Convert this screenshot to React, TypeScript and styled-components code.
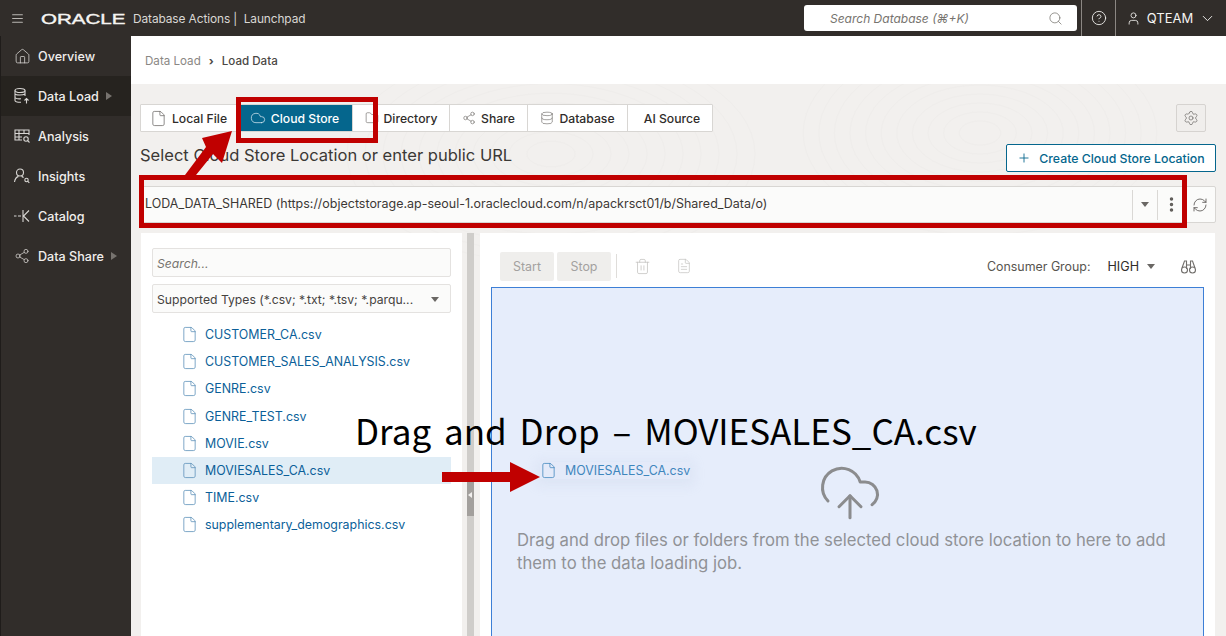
import React from 'react'
import styled, { createGlobalStyle } from 'styled-components'
import {
  AlignJustify,
  ChevronDown,
  CircleHelp,
  Cloud,
  CloudUpload,
  Database,
  EllipsisVertical,
  File,
  FileText,
  Folder,
  House,
  Plus,
  RefreshCw,
  Search,
  Settings,
  Share2,
  Trash2,
  User,
} from 'lucide-react'

const GlobalStyle = createGlobalStyle`
  html, body {
    margin: 0;
    padding: 0;
    width: 1226px;
    height: 636px;
    overflow: hidden;
    font-family: Inter, "Noto Sans", sans-serif;
  }
  * { box-sizing: border-box; }
`

const Page = styled.div`
  position: relative;
  display: flex;
  flex-direction: column;
  width: 1226px;
  height: 636px;
  overflow: hidden;
  background: #fff;
`

const Header = styled.header`
  display: flex;
  align-items: stretch;
  flex: none;
  height: 36px;
  background: #312d2a;
  color: #f5f4f2;
`

const Burger = styled.div`
  display: flex;
  align-items: center;
  width: 41px;
  padding-left: 11px;
  color: #b9b6b2;
`

const Brand = styled.div`
  display: flex;
  align-items: center;
  flex: 1;
`

const OracleMark = styled.span`
  display: inline-block;
  width: 86px;
  font-family: 'Liberation Sans', sans-serif;
  font-size: 15px;
  font-weight: 400;
  -webkit-text-stroke: 0.4px #f5f4f2;
  transform: scaleX(1.37);
  transform-origin: left center;
`

const AppName = styled.span`
  margin-left: 6px;
  font-size: 11.9px;
  color: #d9d7d4;
  letter-spacing: -0.1px;
`

const GlobalSearch = styled.div`
  display: flex;
  align-items: center;
  justify-content: space-between;
  align-self: center;
  width: 273px;
  height: 26px;
  margin-right: 4px;
  padding: 0 14px 0 26px;
  background: #fff;
  border-radius: 3px;
  color: #77746f;
  font-size: 12px;
  font-style: italic;
`

const HeaderCell = styled.div<{ $width: number }>`
  display: flex;
  align-items: center;
  justify-content: center;
  gap: 6px;
  width: ${(p) => p.$width}px;
  border-left: 1px solid #8b8783;
  font-size: 13px;
`

const Body = styled.div`
  display: flex;
  flex: 1;
  min-height: 0;
`

const Sidebar = styled.nav`
  flex: none;
  width: 131px;
  background: #312d2a;
  border-left: 1px solid #1f1c1a;
`

const NavRow = styled.div<{ $active?: boolean }>`
  display: flex;
  align-items: center;
  height: 40px;
  padding-left: 12px;
  gap: 7px;
  background: ${(p) => (p.$active ? '#26231f' : 'transparent')};
  color: #f0eeec;
  font-size: 12.6px;
  font-weight: 500;
`

const NavIcon = styled.span`
  display: flex;
  width: 18px;
  justify-content: center;
  color: #d8d6d3;
`

const NavCaret = styled.span`
  width: 0;
  height: 0;
  border-left: 6px solid #77736f;
  border-top: 4px solid transparent;
  border-bottom: 4px solid transparent;
`

const Main = styled.main`
  display: flex;
  flex-direction: column;
  flex: 1;
  min-width: 0;
`

const Breadcrumbs = styled.div`
  display: flex;
  align-items: center;
  flex: none;
  height: 48px;
  padding: 1px 0 0 14px;
  gap: 8px;
  font-size: 11.6px;
  color: #8a8784;
`

const Crumb = styled.span`
  color: #4b4845;
  font-weight: 500;
`

const CrumbSeparator = styled.span`
  color: #4b4845;
  font-weight: 700;
`

const Workspace = styled.div`
  position: relative;
  display: flex;
  flex-direction: column;
  flex: 1;
  min-height: 0;
  padding: 20px 10px 0 9px;
  background: #f2f0ee;
`

const Texture = styled.svg`
  position: absolute;
  inset: 0;
  width: 100%;
  height: 100%;
  pointer-events: none;
`

const TabRow = styled.div`
  position: relative;
  display: flex;
  justify-content: space-between;
  flex: none;
  height: 28px;
  padding-right: 10px;
`

const Tabs = styled.div`
  display: flex;
  background: #fff;
  border: 1px solid #d8d6d3;
  border-radius: 1px;
`

const Tab = styled.div<{ $width: number; $active?: boolean; $nudge?: number }>`
  display: flex;
  align-items: center;
  justify-content: center;
  gap: 5px;
  width: ${(p) => p.$width}px;
  padding-left: ${(p) => Math.max(p.$nudge ?? 0, 0)}px;
  padding-right: ${(p) => Math.max(-(p.$nudge ?? 0), 0)}px;
  border-left: 1px solid ${(p) => (p.$active ? '#05668d' : '#d8d6d3')};
  background: ${(p) => (p.$active ? '#05668d' : 'transparent')};
  color: ${(p) => (p.$active ? '#fff' : '#2f2c2a')};
  font-size: 12.2px;
  font-weight: 500;
  &:first-child {
    border-left: 0;
  }
  svg {
    color: ${(p) => (p.$active ? '#dcebf2' : '#6f6c69')};
  }
`

const SquareButton = styled.div`
  display: flex;
  align-items: center;
  justify-content: center;
  width: 30px;
  background: #f0eeec;
  border: 1px solid #d6d3d0;
  border-radius: 2px;
  color: #716e6b;
`

const HeadingRow = styled.div`
  position: relative;
  display: flex;
  align-items: flex-start;
  justify-content: space-between;
  flex: none;
  height: 28px;
  margin-top: 12px;
`

const Heading = styled.h2`
  margin: 0;
  font-size: 16.55px;
  font-weight: 400;
  line-height: 22px;
  color: #3b3835;
`

const CreateButton = styled.div`
  display: flex;
  align-items: center;
  justify-content: center;
  gap: 8px;
  width: 210px;
  height: 28px;
  background: #fff;
  border: 1px solid #05668d;
  border-radius: 2px;
  color: #05668d;
  font-size: 12.3px;
  font-weight: 500;
`

const LocationRow = styled.div`
  position: relative;
  display: flex;
  flex: none;
  height: 37px;
  margin-top: 14px;
  background: #fbfbfa;
  border: 1px solid #d8d6d3;
  border-radius: 2px;
  align-items: center;
`

const LocationText = styled.div`
  flex: 1;
  padding: 0 0 2px 4px;
  font-size: 12.48px;
  color: #3b3835;
  white-space: nowrap;
`

const LocationCell = styled.div<{ $width: number; $divider?: boolean }>`
  display: flex;
  align-items: center;
  justify-content: center;
  width: ${(p) => p.$width}px;
  height: 30px;
  border-left: ${(p) => (p.$divider ? '1px solid #dad8d5' : '0')};
  color: #5f5c59;
`

const Caret = styled.span`
  display: inline-block;
  width: 0;
  height: 0;
  border-top: 5px solid #6a6764;
  border-left: 4px solid transparent;
  border-right: 4px solid transparent;
`

const Panels = styled.div`
  position: relative;
  display: flex;
  flex: 1;
  min-height: 0;
  margin-top: 10px;
`

const LeftPanel = styled.section`
  flex: none;
  width: 321px;
  margin-left: 1px;
  padding: 15px 11px 0;
  background: #fff;
`

const FieldBox = styled.div`
  display: flex;
  align-items: center;
  justify-content: space-between;
  height: 29px;
  padding: 1px 4px 0;
  background: #fbfbfa;
  border: 1px solid #e4e2e0;
  border-radius: 2px;
  font-size: 12.2px;
  color: #45423f;
`

const SearchBox = styled(FieldBox)`
  margin-bottom: 7px;
  font-style: italic;
  color: #77746f;
`

const TypeSelect = styled(FieldBox)`
  padding-right: 11px;
  margin-bottom: 8px;
`

const FileRow = styled.div<{ $selected?: boolean }>`
  display: flex;
  align-items: center;
  gap: 7px;
  height: 27.2px;
  padding-left: 29px;
  background: ${(p) => (p.$selected ? '#e0edf6' : 'transparent')};
  color: #0b5f99;
  font-size: 12.4px;
  svg {
    color: #5a8fb8;
  }
`

const Splitter = styled.div`
  position: relative;
  display: flex;
  flex: none;
  width: 18px;
  padding-left: 5px;
  &::before {
    content: '';
    width: 7px;
    background: #cfcdca;
  }
`

const SplitHandle = styled.span`
  position: absolute;
  left: 5px;
  top: 249px;
  width: 7px;
  height: 34px;
  background: #a3a09d;
  &::after {
    content: '';
    position: absolute;
    left: 1px;
    top: 10px;
    border-right: 4px solid #f2f0ee;
    border-top: 3px solid transparent;
    border-bottom: 3px solid transparent;
  }
`

const RightPanel = styled.section`
  display: flex;
  flex-direction: column;
  flex: none;
  width: 735px;
  background: #fff;
`

const Toolbar = styled.div`
  display: flex;
  align-items: center;
  flex: none;
  height: 54px;
  padding: 12px 18px 0 20px;
  gap: 3px;
`

const GhostButton = styled.div`
  display: flex;
  align-items: center;
  justify-content: center;
  width: 54px;
  height: 29px;
  background: #efeeec;
  border-radius: 2px;
  color: #a3a19f;
  font-size: 12.4px;
`

const ToolDivider = styled.span`
  width: 1px;
  height: 24px;
  margin-left: 2px;
  background: #dfddda;
`

const ToolIcon = styled.span<{ $left: number }>`
  display: flex;
  margin-left: ${(p) => p.$left}px;
  color: #c4c2c0;
`

const ConsumerLabel = styled.span`
  margin-left: auto;
  color: #57544f;
  font-size: 12.4px;
`

const ConsumerValue = styled.span`
  margin-left: 14px;
  margin-right: 5px;
  color: #2f2c2a;
  font-size: 12.6px;
`

const Binoculars = styled.svg`
  margin-left: 22px;
  color: #716e6b;
`

const DropZone = styled.div`
  position: relative;
  flex: 1;
  margin: 0 11px;
  background: #e6edfb;
  border: 1px solid #3d7fd6;
  border-bottom: 0;
`

const DropMessage = styled.p`
  position: absolute;
  left: 25px;
  top: 241px;
  width: 670px;
  margin: 0;
  font-size: 16.7px;
  line-height: 23px;
  color: #909296;
`

const DropIcon = styled.span`
  position: absolute;
  left: 325px;
  top: 172px;
  display: flex;
  color: #8b8c8e;
`

const DragGhost = styled.div`
  position: absolute;
  left: 48px;
  top: 174px;
  display: flex;
  align-items: center;
  gap: 8px;
  color: #3f86bd;
  font-size: 12.4px;
  box-shadow: 0 3px 12px 4px rgba(170, 185, 215, 0.14);
  background: rgba(225, 232, 248, 0.5);
`

const RedFrame = styled.div<{ $left: number; $top: number; $width: number; $height: number }>`
  position: absolute;
  left: ${(p) => p.$left}px;
  top: ${(p) => p.$top}px;
  width: ${(p) => p.$width}px;
  height: ${(p) => p.$height}px;
  border: 5px solid #c00000;
  pointer-events: none;
`

const Annotation = styled.svg`
  position: absolute;
  inset: 0;
  pointer-events: none;
`

const Callout = styled.div`
  position: absolute;
  left: 355px;
  top: 405px;
  font-family: 'Noto Sans CJK KR', 'Noto Sans', sans-serif;
  font-size: 35px;
  word-spacing: 5px;
  line-height: 50px;
  color: #000;
  white-space: nowrap;
`

const SmallBadgeIcon = ({ children }: { children: React.ReactNode }) => (
  <svg width="18" height="18" viewBox="0 0 18 18" fill="none" stroke="currentColor" strokeWidth="1.1">
    {children}
  </svg>
)

const files = [
  'CUSTOMER_CA.csv',
  'CUSTOMER_SALES_ANALYSIS.csv',
  'GENRE.csv',
  'GENRE_TEST.csv',
  'MOVIE.csv',
  'MOVIESALES_CA.csv',
  'TIME.csv',
  'supplementary_demographics.csv',
]

const rings = [16, 28, 40, 52, 64, 76, 88, 100, 112, 124, 136]

const App = () => {
  return (
    <Page>
      <GlobalStyle />
      <Header>
        <Burger>
          <AlignJustify size={13} />
        </Burger>
        <Brand>
          <OracleMark>ORACLE</OracleMark>
          <AppName>Database Actions |&nbsp; Launchpad</AppName>
        </Brand>
        <GlobalSearch>
          <span>Search Database (⌘+K)</span>
          <Search size={15} strokeWidth={1.2} />
        </GlobalSearch>
        <HeaderCell $width={34}>
          <CircleHelp size={16} strokeWidth={1.3} />
        </HeaderCell>
        <HeaderCell $width={111}>
          <User size={15} strokeWidth={1.3} />
          <span>QTEAM</span>
          <ChevronDown size={17} strokeWidth={1.3} />
        </HeaderCell>
      </Header>
      <Body>
        <Sidebar>
          <NavRow>
            <NavIcon>
              <House size={17} strokeWidth={1.1} />
            </NavIcon>
            Overview
          </NavRow>
          <NavRow $active>
            <NavIcon>
              <SmallBadgeIcon>
                <ellipse cx="7" cy="3.5" rx="5" ry="2" />
                <path d="M2 3.5v10c0 1 2 1.8 6 1.8M12 3.5V9M2 7c1 1.4 8 1.4 10 0M2 10.5c1 1.2 4 1.5 6 1.3" />
                <path d="M13.5 16.5v-5M11.5 13.5l2-2 2 2" />
              </SmallBadgeIcon>
            </NavIcon>
            Data Load
            <NavCaret />
          </NavRow>
          <NavRow>
            <NavIcon>
              <SmallBadgeIcon>
                <path d="M9 13H2V3h14v5M2 6.5h14M2 10h7M6 3v10M11 3v3.5" />
                <circle cx="13" cy="12" r="2.2" />
                <path d="M14.6 13.6 16.5 15.5" />
              </SmallBadgeIcon>
            </NavIcon>
            Analysis
          </NavRow>
          <NavRow>
            <NavIcon>
              <SmallBadgeIcon>
                <circle cx="7" cy="5.5" r="3.5" />
                <path d="M1.5 15c.5-3 2-5 4-5.6M8.5 9.4c1 .3 1.6.7 2 1.2" />
                <circle cx="13.5" cy="13" r="1.7" />
                <path d="M14.8 14.3 16.3 15.8" />
              </SmallBadgeIcon>
            </NavIcon>
            Insights
          </NavRow>
          <NavRow>
            <NavIcon>
              <SmallBadgeIcon>
                <path d="M1 9h2.5M5 9h3M10 3v12M16 3.5 10.5 9l5.5 5.5" />
              </SmallBadgeIcon>
            </NavIcon>
            Catalog
          </NavRow>
          <NavRow>
            <NavIcon>
              <Share2 size={16} strokeWidth={1.1} />
            </NavIcon>
            Data Share
            <NavCaret />
          </NavRow>
        </Sidebar>
        <Main>
          <Breadcrumbs>
            <span>Data Load</span>
            <CrumbSeparator>›</CrumbSeparator>
            <Crumb>Load Data</Crumb>
          </Breadcrumbs>
          <Workspace>
            <Texture viewBox="0 0 1095 552" fill="none" stroke="#efedeb" strokeWidth="1">
              {rings.map((r) => (
                <ellipse key={r} cx="849" cy="49" rx={r * 1.3} ry={r * 0.75} />
              ))}
              {rings.map((r) => (
                <ellipse key={r} cx="420" cy="70" rx={r * 1.5} ry={r * 0.8} />
              ))}
            </Texture>
            <TabRow>
              <Tabs>
                <Tab $width={99} $nudge={-4}>
                  <File size={17} strokeWidth={1.1} />
                  Local File
                </Tab>
                <Tab $width={112} $active $nudge={-4}>
                  <Cloud size={16} strokeWidth={1.1} />
                  Cloud Store
                </Tab>
                <Tab $width={97}>
                  <Folder size={14} strokeWidth={1.1} />
                  Directory
                </Tab>
                <Tab $width={78}>
                  <Share2 size={14} strokeWidth={1.1} />
                  Share
                </Tab>
                <Tab $width={100}>
                  <Database size={14} strokeWidth={1.1} />
                  Database
                </Tab>
                <Tab $width={85} $nudge={4}>
                  AI Source
                </Tab>
              </Tabs>
              <SquareButton>
                <Settings size={16} strokeWidth={1.1} />
              </SquareButton>
            </TabRow>
            <HeadingRow>
              <Heading>Select Cloud Store Location or enter public URL</Heading>
              <CreateButton>
                <Plus size={14} strokeWidth={1.5} />
                Create Cloud Store Location
              </CreateButton>
            </HeadingRow>
            <LocationRow>
              <LocationText>
                LODA_DATA_SHARED (https://objectstorage.ap-seoul-1.oraclecloud.com/n/apackrsct01/b/Shared_Data/o)
              </LocationText>
              <LocationCell $width={25} $divider>
                <Caret />
              </LocationCell>
              <LocationCell $width={28} $divider>
                <EllipsisVertical size={19} strokeWidth={2.4} />
              </LocationCell>
              <LocationCell $width={30}>
                <RefreshCw size={16} strokeWidth={1.3} />
              </LocationCell>
            </LocationRow>
            <Panels>
              <LeftPanel>
                <SearchBox>Search...</SearchBox>
                <TypeSelect>
                  Supported Types (*.csv; *.txt; *.tsv; *.parqu...
                  <Caret />
                </TypeSelect>
                {files.map((name) => (
                  <FileRow key={name} $selected={name === 'MOVIESALES_CA.csv'}>
                    <File size={17} strokeWidth={1.1} />
                    {name}
                  </FileRow>
                ))}
              </LeftPanel>
              <Splitter>
                <SplitHandle />
              </Splitter>
              <RightPanel>
                <Toolbar>
                  <GhostButton>Start</GhostButton>
                  <GhostButton>Stop</GhostButton>
                  <ToolDivider />
                  <ToolIcon $left={14}>
                    <Trash2 size={17} strokeWidth={1.1} />
                  </ToolIcon>
                  <ToolIcon $left={22}>
                    <FileText size={16} strokeWidth={1.1} />
                  </ToolIcon>
                  <ConsumerLabel>Consumer Group:</ConsumerLabel>
                  <ConsumerValue>HIGH</ConsumerValue>
                  <Caret />
                  <Binoculars width="17" height="17" viewBox="0 0 17 17" fill="none" stroke="currentColor" strokeWidth="1.1">
                    <path d="M2 10 4.500 3h2v8M15 10l-2.500-7h-2v8M6.500 7h4" />
                    <circle cx="4.500" cy="12" r="3" />
                    <circle cx="12.500" cy="12" r="3" />
                  </Binoculars>
                </Toolbar>
                <DropZone>
                  <DragGhost>
                    <File size={17} strokeWidth={1.1} />
                    MOVIESALES_CA.csv
                  </DragGhost>
                  <DropIcon>
                    <CloudUpload size={66} strokeWidth={1.1} />
                  </DropIcon>
                  <DropMessage>
                    Drag and drop files or folders from the selected cloud store location to here to add them to the data loading job.
                  </DropMessage>
                </DropZone>
              </RightPanel>
            </Panels>
          </Workspace>
        </Main>
      </Body>

      <RedFrame $left={236} $top={97} $width={142} $height={46} />
      <RedFrame $left={139} $top={175} $width={1048} $height={53} />
      <Annotation width="1226" height="636" viewBox="0 0 1226 636">
        <polygon fill="#c00000" points="232,131 222,163 213,154 192,180 185,175 206,147 202,138" />
        <polygon fill="#c00000" points="442,472 510,472 510,462 540,477 510,492 510,482 442,482" />
      </Annotation>
      <Callout>Drag and Drop – MOVIESALES_CA.csv</Callout>
    </Page>
  )
}

export default App
